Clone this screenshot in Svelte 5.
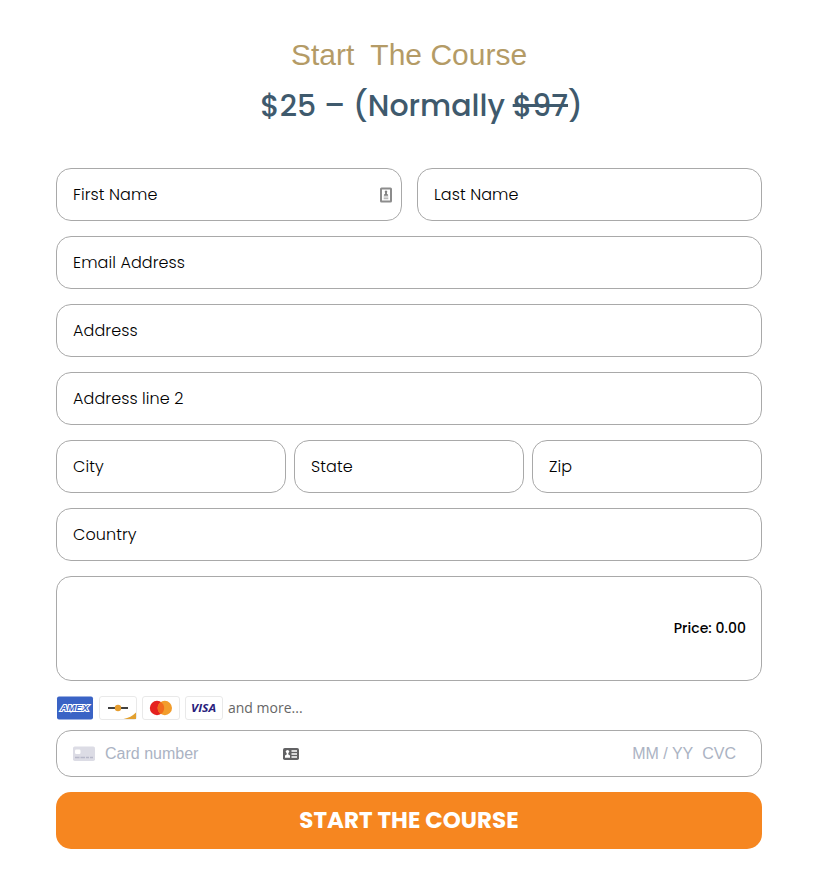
<script>
  const rows = [
    { cols: 'two', fields: [{ label: 'First Name', autofill: true }, { label: 'Last Name' }] },
    { cols: 'one', fields: [{ label: 'Email Address' }] },
    { cols: 'one', fields: [{ label: 'Address' }] },
    { cols: 'one', fields: [{ label: 'Address line 2' }] },
    { cols: 'three', fields: [{ label: 'City' }, { label: 'State' }, { label: 'Zip' }] },
    { cols: 'one', fields: [{ label: 'Country' }] }
  ];
</script>

<main>
  <header>
    <h1>Start&nbsp; The Course</h1>
    <h2>$25 – (Normally <s>$97</s>)</h2>
  </header>

  <form>
    {#each rows as row}
      <div class="row {row.cols}">
        {#each row.fields as field}
          <div class="field">
            <span class="label">{field.label}</span>
            {#if field.autofill}
              <svg class="autofill" width="12" height="16" viewBox="0 0 12 16">
                <rect x="1" y="1.500" width="10" height="13" rx="0.500" fill="#fff" stroke="#8c8c8c" stroke-width="2" />
                <path d="M6 3.500a1.300 1.300 0 0 1 .9 2.200v1.100l1.200.9v1H3.900v-1l1.200-.9V5.700A1.300 1.300 0 0 1 6 3.500z" fill="#808080" />
                <path d="M3.700 10h4.600M3.700 11.700h4.600" stroke="#aaa" stroke-width="1" />
              </svg>
            {/if}
          </div>
        {/each}
      </div>
    {/each}

    <div class="summary">
      <span class="price">Price: 0.00</span>
    </div>

    <div class="cards">
      <svg width="38" height="24" viewBox="0 0 38 24">
        <rect x="1" y="0.500" width="36" height="23" rx="2" fill="#3a63c5" />
        <text class="amex" x="18.500" y="15" text-anchor="middle" textLength="28" lengthAdjust="spacingAndGlyphs">AMEX</text>
      </svg>
      <svg width="38" height="24" viewBox="0 0 38 24">
        <rect x="0.500" y="0.500" width="37" height="23" rx="2.500" fill="#fff" stroke="#e9e9e9" />
        <path d="M37 16.500V23H24.500Q32 21.500 37 16.500z" fill="#e2a02f" />
        <path d="M9 12h20" stroke="#414141" stroke-width="2" />
        <circle cx="19" cy="12" r="3.200" fill="#e69d2e" />
      </svg>
      <svg width="38" height="24" viewBox="0 0 38 24">
        <rect x="0.500" y="0.500" width="37" height="23" rx="2.500" fill="#fff" stroke="#e9e9e9" />
        <circle cx="15" cy="12" r="7.200" fill="#e5221f" />
        <circle cx="22.800" cy="12" r="7.200" fill="#f29d2c" />
        <path d="M18.900 5.950a7.200 7.200 0 0 1 0 12.100a7.200 7.200 0 0 1 0-12.100z" fill="#f26a1d" />
      </svg>
      <svg width="38" height="24" viewBox="0 0 38 24">
        <rect x="0.500" y="0.500" width="37" height="23" rx="2.500" fill="#fff" stroke="#e9e9e9" />
        <text class="visa" x="18.500" y="16" text-anchor="middle" textLength="25" lengthAdjust="spacingAndGlyphs">VISA</text>
      </svg>
      <span class="more">and more...</span>
    </div>

    <div class="card-field">
      <svg class="card-icon" width="22" height="16" viewBox="0 0 22 16">
        <rect y="0.500" width="22" height="14.500" rx="1.800" fill="#dcdce5" />
        <rect x="2" y="3.500" width="5.500" height="4.500" rx="1.200" fill="#fff" />
        <path d="M2 11.500h4.500M7.500 11.500H12M13 11.500h3M17 11.500h3" stroke="#b7b8c9" stroke-width="1.500" />
      </svg>
      <span class="number">Card number</span>
      <svg class="contact" width="16" height="12" viewBox="0 0 16 12">
        <rect width="16" height="12" rx="1.800" fill="#626264" />
        <circle cx="4.500" cy="3.600" r="1.700" fill="#fff" />
        <path d="M3.700 5h1.600v1.500l1.700 1v2.300H2V7.500l1.700-1z" fill="#fff" />
        <path d="M8.500 3H14M8.500 6H14M8.500 9H14" stroke="#fff" stroke-width="1.300" />
      </svg>
      <span class="expiry">MM / YY</span>
      <span class="cvc">CVC</span>
    </div>

    <button type="button">START THE COURSE</button>
  </form>
</main>

<style>
  :global(body) {
    background: #fff;
  }

  main {
    width: 706px;
    margin-left: 56px;
    padding-top: 35px;
    font-family: Poppins, Inter, sans-serif;
  }

  header {
    height: 133px;
    text-align: center;
  }

  h1,
  h2 {
    margin: 0;
    white-space: nowrap;
  }

  h1 {
    color: #b49b66;
    font: 400 30px/40px 'Liberation Sans', Arial, sans-serif;
  }

  h2 {
    padding: 8px 0 0 25px;
    color: #3f5a6d;
    font-size: 30px;
    font-weight: 500;
    line-height: 46px;
  }

  s {
    text-decoration-thickness: 3px;
  }

  form {
    display: flex;
    flex-direction: column;
  }

  .row {
    display: grid;
    margin-bottom: 15px;
  }

  .two {
    grid-template-columns: 346px 345px;
    gap: 15px;
  }

  .three {
    grid-template-columns: repeat(3, 1fr);
    gap: 8px;
  }

  .field,
  .summary,
  .card-field {
    display: flex;
    align-items: center;
    box-sizing: border-box;
    border: 1px solid #a9a9a9;
    border-radius: 15px;
  }

  .field {
    justify-content: space-between;
    height: 53px;
    padding: 0 9px 0 16px;
  }

  .label {
    color: #000;
    font-size: 16px;
    font-weight: 300;
    letter-spacing: 0.08px;
  }

  .summary {
    justify-content: flex-end;
    height: 105px;
    padding: 0 15px;
  }

  .price {
    color: #000;
    font-size: 14px;
    font-weight: 500;
    letter-spacing: 0.05px;
  }

  .cards {
    display: flex;
    align-items: center;
    gap: 5px;
    height: 24px;
    margin-top: 15px;
  }

  .amex {
    fill: #3a63c5;
    stroke: #fff;
    stroke-width: 2px;
    paint-order: stroke;
    font: italic 700 8.5px 'Liberation Sans', Arial, sans-serif;
  }

  .visa {
    fill: #29217c;
    font: italic 700 11px 'Open Sans', sans-serif;
  }

  .more {
    color: #666;
    font: 14px/24px 'Open Sans', sans-serif;
  }

  .card-field {
    height: 47px;
    margin-top: 10px;
    padding: 0 25px 0 16px;
    color: #abb3c3;
    font: 16px 'Liberation Sans', Arial, sans-serif;
  }

  .number {
    width: 178px;
    margin-left: 10px;
  }

  .expiry {
    margin-left: auto;
  }

  .cvc {
    margin-left: 9px;
  }

  button {
    height: 57px;
    margin-top: 15px;
    padding: 0 0 2px;
    border: 0;
    border-radius: 15px;
    background: #f68620;
    color: #fff;
    font: 700 23px Poppins, Inter, sans-serif;
  }
</style>
